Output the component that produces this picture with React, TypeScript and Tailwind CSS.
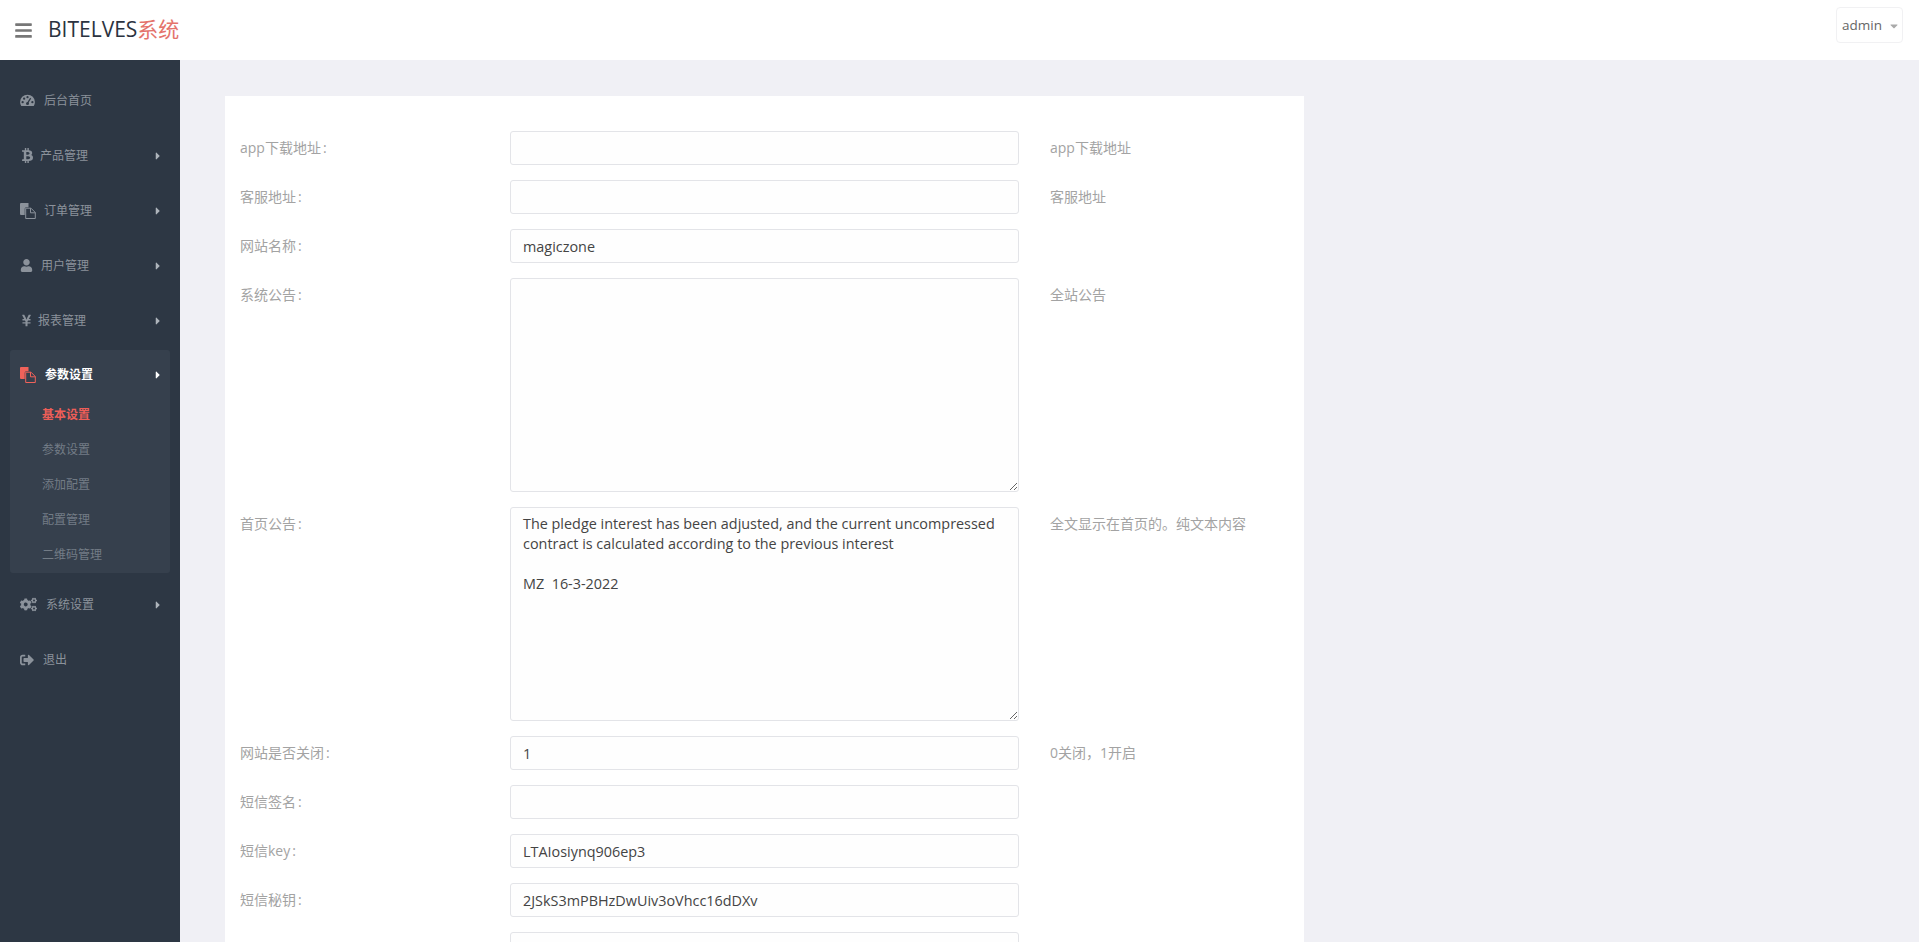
import type { ReactNode } from "react";
import {
  FaBars,
  FaBtc,
  FaCaretDown,
  FaCaretRight,
  FaCogs,
  FaSignOutAlt,
  FaUser,
  FaYenSign,
} from "react-icons/fa";

const fontStack = "font-['Open_Sans','Noto_Sans_CJK_SC',sans-serif]";

function DashIcon() {
  return (
    <svg width="15" height="13" viewBox="0 0 16 13.5" fill="currentColor">
      <path d="M8 .5A7.9 7.9 0 0 0 .1 8.4c0 1.5.4 2.9 1.1 4 .1.2.3.3.6.3h12.4c.3 0 .5-.1.6-.3.7-1.1 1.1-2.5 1.1-4A7.9 7.9 0 0 0 8 .5z" />
      <g fill="#2d3744">
        <circle cx="2.8" cy="8.6" r="1.2" />
        <circle cx="4.4" cy="4.8" r="1.2" />
        <circle cx="8" cy="3.2" r="1.2" />
        <circle cx="13.2" cy="8.6" r="1.2" />
        <circle cx="8" cy="10" r="1.6" />
      </g>
      <path d="M7.4 9.5l3.4-5.6 1.1.6-3.4 5.6z" fill="#2d3744" />
    </svg>
  );
}

function FilesIcon() {
  return (
    <svg width="16" height="16" viewBox="0 0 16 16" fill="currentColor">
      <path d="M1 0h7.5v4.2H6.2a1.5 1.5 0 0 0-1.5 1.5V12H1a1 1 0 0 1-1-1V1a1 1 0 0 1 1-1z" />
      <path d="M5.7 5.2h5.3l4.3 4.3v6H5.7zM10.5 5.2v4.6h4.8" fill="none" stroke="currentColor" strokeWidth="1" />
    </svg>
  );
}

type NavItem = { icon: ReactNode; label: string; iconBox: string; arrow?: boolean };

function NavRow({ icon, label, iconBox, arrow }: NavItem) {
  return (
    <div className="flex h-[55px] items-center pl-5 pr-4 text-xs text-[#8b929b]">
      <span className={`flex items-center ${iconBox}`}>{icon}</span>
      <span>{label}</span>
      {arrow && <FaCaretRight className="ml-auto text-[12px] text-[#aeb4bb]" />}
    </div>
  );
}

function Sidebar() {
  return (
    <aside className="h-full w-[180px] shrink-0 bg-[#2d3744] pt-[13px]">
      <NavRow icon={<DashIcon />} label="后台首页" iconBox="w-[24px]" />
      <NavRow icon={<FaBtc className="text-[15px]" />} label="产品管理" iconBox="w-[20px]" arrow />
      <NavRow icon={<FilesIcon />} label="订单管理" iconBox="w-[24px]" arrow />
      <NavRow icon={<FaUser className="text-[13px]" />} label="用户管理" iconBox="w-[21px]" arrow />
      <NavRow icon={<FaYenSign className="text-[13px]" />} label="报表管理" iconBox="w-[18px]" arrow />

      <div className="mx-[10px] mt-[2px] h-[223px] rounded-[3px] bg-[#36404d]">
        <div className="flex h-[50px] items-center pl-[10px] pr-[6px] text-xs font-semibold text-white">
          <span className="w-[25px] text-[#f0625a]">
            <FilesIcon />
          </span>
          <span>参数设置</span>
          <FaCaretRight className="ml-auto text-[12px]" />
        </div>
        <div className="flex h-[30px] items-center pl-[32px] text-xs font-semibold text-[#ee5e58]">基本设置</div>
        <div className="mt-[5px] flex h-[30px] items-center pl-[32px] text-xs text-[#737c86]">参数设置</div>
        <div className="mt-[5px] flex h-[30px] items-center pl-[32px] text-xs text-[#737c86]">添加配置</div>
        <div className="mt-[5px] flex h-[30px] items-center pl-[32px] text-xs text-[#737c86]">配置管理</div>
        <div className="mt-[5px] flex h-[30px] items-center pl-[32px] text-xs text-[#737c86]">二维码管理</div>
      </div>

      <div className="mt-1">
        <NavRow icon={<FaCogs className="text-[17px]" />} label="系统设置" iconBox="w-[26px]" arrow />
        <NavRow icon={<FaSignOutAlt className="text-[14px]" />} label="退出" iconBox="w-[23px]" />
      </div>
    </aside>
  );
}

function Field({
  label,
  help,
  value = "",
  tall,
}: {
  label?: string;
  help?: string;
  value?: string;
  tall?: boolean;
}) {
  const boxClass =
    "block w-[509px] rounded-[3px] border border-[#e3e4e8] bg-[#fefefe] px-3 text-[14.4px] leading-5 text-[#444] outline-none";

  return (
    <div className="mb-[15px] flex pl-[15px] text-sm leading-5 text-[#a3a3a3]">
      <label className="w-[270px] shrink-0 pt-[7px]">
        {label && (
          <>
            {label}
            <span className="ml-[2px]">:</span>
          </>
        )}
      </label>
      {tall ? (
        <textarea readOnly value={value} className={`${boxClass} h-[214px] py-[6px]`} />
      ) : (
        <input readOnly value={value} className={`${boxClass} h-[34px]`} />
      )}
      {help && <span className="ml-[31px] pt-[7px]">{help}</span>}
    </div>
  );
}

export default function App() {
  const notice =
    "The pledge interest has been adjusted, and the current uncompressed contract is calculated according to the previous interest\n\nMZ  16-3-2022";

  return (
    <div className={`flex h-screen flex-col overflow-hidden bg-[#f0f0f5] ${fontStack}`}>
      <header className="flex h-[60px] shrink-0 items-center bg-white pl-[14px] pr-4">
        <FaBars className="text-[19px] text-[#777]" />
        <div className="ml-[15px] text-[21px] text-[#2b3340]">
          BITELVES<span className="text-[#e4736c]">系统</span>
        </div>
        <button className="mb-[10px] ml-auto flex h-[36px] w-[67px] items-center gap-[6px] rounded-[4px] border border-[#f1f1f3] pl-[5px] pt-[1px] text-[13.5px] text-[#666]">
          admin
          <FaCaretDown className="text-[12px] text-[#aaa]" />
        </button>
      </header>

      <div className="flex min-h-0 flex-1">
        <Sidebar />
        <main className="min-w-0 flex-1 pl-[45px] pt-[36px]">
          <form className="w-[1079px] bg-white pt-[35px]">
            <Field label="app下载地址" help="app下载地址" />
            <Field label="客服地址" help="客服地址" />
            <Field label="网站名称" value="magiczone" />
            <Field label="系统公告" help="全站公告" tall />
            <Field label="首页公告" help="全文显示在首页的。纯文本内容" value={notice} tall />
            <Field label="网站是否关闭" help="0关闭，1开启" value="1" />
            <Field label="短信签名" />
            <Field label="短信key" value="LTAIosiynq906ep3" />
            <Field label="短信秘钥" value="2JSkS3mPBHzDwUiv3oVhcc16dDXv" />
            <Field />
          </form>
        </main>
      </div>
    </div>
  );
}
